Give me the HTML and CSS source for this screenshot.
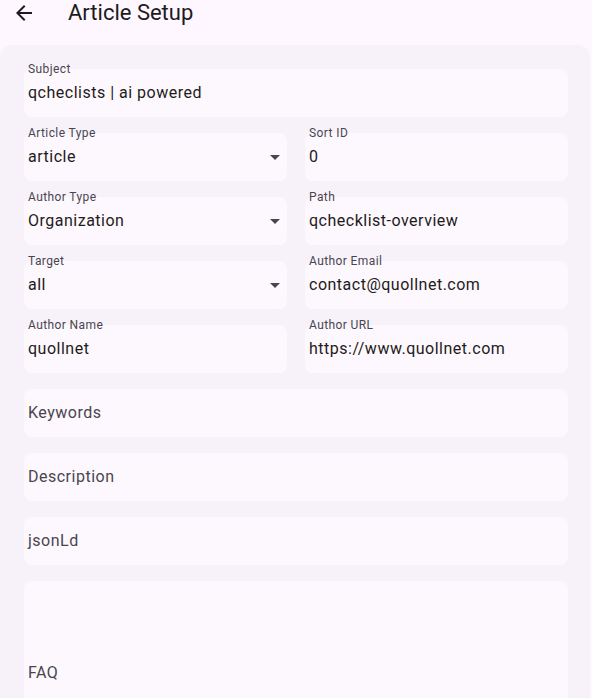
FILE: index.html
```html
<!DOCTYPE html>
<html>
<head>
<meta charset="utf-8">
<link rel="stylesheet" href="styles.css">
</head>
<body>
<div class="appbar">
  <svg class="back" width="24" height="24" viewBox="0 0 24 24"><path d="M20 11H7.83l5.59-5.59L12 4l-8 8 8 8 1.41-1.41L7.83 13H20v-2z" fill="#1d1b20"/></svg>
  <div class="title">Article Setup</div>
</div>
<div class="card">
  <div class="grid">
    <div class="field span2"><span class="label">Subject</span><div class="box"><span class="value">qcheclists | ai powered</span></div></div>

    <div class="field"><span class="label">Article Type</span><div class="box"><span class="value">article</span><span class="caret"></span></div></div>
    <div class="field"><span class="label">Sort ID</span><div class="box"><span class="value">0</span></div></div>

    <div class="field"><span class="label">Author Type</span><div class="box"><span class="value">Organization</span><span class="caret"></span></div></div>
    <div class="field"><span class="label">Path</span><div class="box"><span class="value">qchecklist-overview</span></div></div>

    <div class="field"><span class="label">Target</span><div class="box"><span class="value">all</span><span class="caret"></span></div></div>
    <div class="field"><span class="label">Author Email</span><div class="box"><span class="value">contact@quollnet.com</span></div></div>

    <div class="field"><span class="label">Author Name</span><div class="box"><span class="value">quollnet</span></div></div>
    <div class="field"><span class="label">Author URL</span><div class="box"><span class="value">https://www.quollnet.com</span></div></div>

    <div class="field span2"><div class="box"><span class="hint">Keywords</span></div></div>
    <div class="field span2"><div class="box"><span class="hint">Description</span></div></div>
    <div class="field span2"><div class="box"><span class="hint">jsonLd</span></div></div>
    <div class="field span2"><div class="box tall"><span class="hint">FAQ</span></div></div>
  </div>
</div>
</body>
</html>
```
FILE: styles.css
```css
html, body {
  margin: 0;
  padding: 0;
  background: #fef7ff;
  overflow: hidden;
  height: 698px;
  font-family: Roboto, "Liberation Sans", sans-serif;
  color: #1d1b20;
}
.appbar {
  height: 45px;
  display: flex;
  align-items: flex-start;
  padding-top: 1px;
  box-sizing: border-box;
}
.back {
  margin-left: 12px;
  flex: none;
}
.title {
  margin-left: 32px;
  font-size: 22px;
  line-height: 24px;
  color: #1d1b20;
}
.card {
  width: 590px;
  box-sizing: border-box;
  background: #f7f2fa;
  border-radius: 12px 12px 0 0;
  padding: 16px 22px 0 24px;
  height: 653px;
  overflow: hidden;
}
.grid {
  display: grid;
  grid-template-columns: 263px 263px;
  column-gap: 18px;
  row-gap: 8px;
}
.span2 {
  grid-column: 1 / 3;
}
.field {
  padding-top: 8px;
}
.label {
  display: block;
  position: relative;
  z-index: 1;
  height: 16px;
  line-height: 16px;
  margin-top: -8px;
  margin-bottom: -8px;
  padding-left: 4px;
  font-size: 12px;
  letter-spacing: 0.4px;
  color: #49454f;
}
.box {
  height: 48px;
  background: #fdf8fd;
  border-radius: 8px;
  display: flex;
  align-items: center;
  padding: 0 6px 0 4px;
  box-sizing: border-box;
}
.box.tall {
  height: 130px;
  align-items: flex-start;
  padding-top: 80px;
}
.value, .hint {
  font-size: 16px;
  line-height: 24px;
  letter-spacing: 0.5px;
  flex: 1;
}
.value {
  color: #1d1b20;
}
.hint {
  color: #49454f;
}
.caret {
  width: 0;
  height: 0;
  border-left: 5px solid transparent;
  border-right: 5px solid transparent;
  border-top: 5px solid #49454f;
  margin-right: 1px;
  margin-top: 1px;
}
```
